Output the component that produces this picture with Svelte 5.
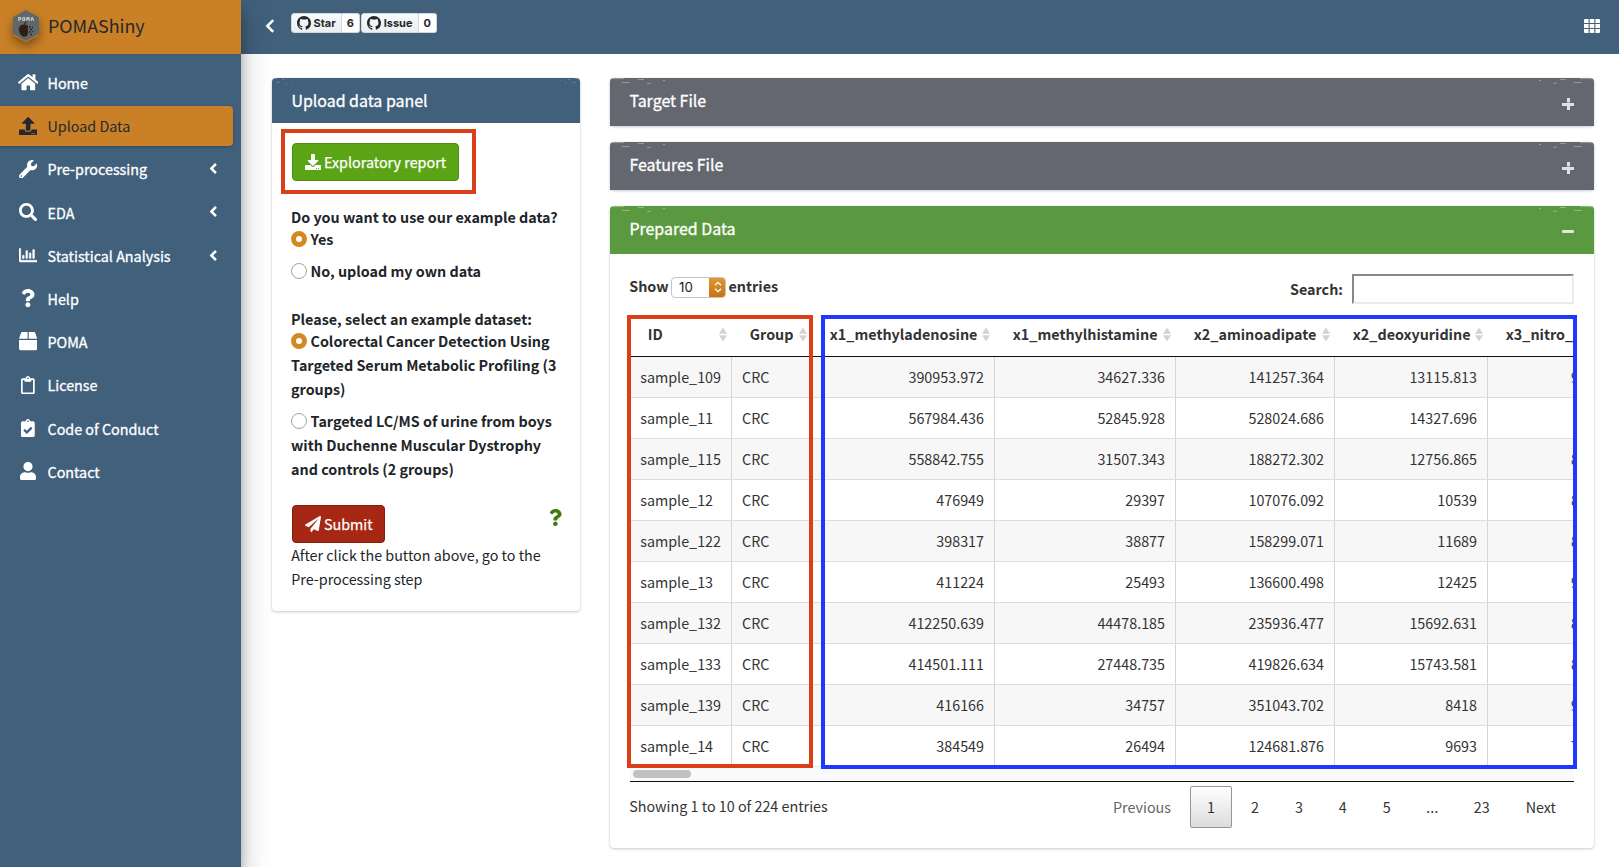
<script>
  const icons = {
    home: [576, 'M280.37 148.26L96 300.11V464a16 16 0 0 0 16 16l112.06-.29a16 16 0 0 0 15.92-16V368a16 16 0 0 1 16-16h64a16 16 0 0 1 16 16v95.64a16 16 0 0 0 16 16.05L464 480a16 16 0 0 0 16-16V300L295.67 148.26a12.19 12.19 0 0 0-15.3 0zM571.6 251.47L488 182.56V44.05a12 12 0 0 0-12-12h-56a12 12 0 0 0-12 12v72.61L318.47 43a48 48 0 0 0-61 0L4.34 251.47a12 12 0 0 0-1.6 16.9l25.5 31A12 12 0 0 0 45.15 301l235.22-193.74a12.19 12.19 0 0 1 15.3 0L530.9 301a12 12 0 0 0 16.9-1.6l25.5-31a12 12 0 0 0-1.7-16.93z'],
    upload: [512, 'M296 384h-80c-13.3 0-24-10.7-24-24V192h-87.7c-17.8 0-26.7-21.5-14.1-34.1L242.3 5.7c7.5-7.5 19.8-7.5 27.3 0l152.2 152.2c12.6 12.6 3.7 34.1-14.1 34.1H320v168c0 13.3-10.7 24-24 24zm216-8v112c0 13.3-10.7 24-24 24H24c-13.3 0-24-10.7-24-24V376c0-13.3 10.7-24 24-24h136v8c0 30.9 25.1 56 56 56h80c30.9 0 56-25.1 56-56v-8h136c13.3 0 24 10.7 24 24zm-124 88c0-11-9-20-20-20s-20 9-20 20 9 20 20 20 20-9 20-20zm64 0c0-11-9-20-20-20s-20 9-20 20 9 20 20 20 20-9 20-20z'],
    download: [512, 'M216 0h80c13.3 0 24 10.7 24 24v168h87.7c17.8 0 26.7 21.5 14.1 34.1L269.7 378.3c-7.5 7.5-19.8 7.5-27.3 0L90.1 226.1c-12.6-12.6-3.7-34.1 14.1-34.1H192V24c0-13.3 10.7-24 24-24zm296 376v112c0 13.3-10.7 24-24 24H24c-13.3 0-24-10.7-24-24V376c0-13.3 10.7-24 24-24h146.7l49 49c20.1 20.1 52.5 20.1 72.6 0l49-49H488c13.3 0 24 10.7 24 24zm-124 88c0-11-9-20-20-20s-20 9-20 20 9 20 20 20 20-9 20-20zm64 0c0-11-9-20-20-20s-20 9-20 20 9 20 20 20 20-9 20-20z'],
    wrench: [512, 'M507.73 109.1c-2.24-9.03-13.54-12.09-20.12-5.51l-74.36 74.36-67.88-11.31-11.31-67.88 74.36-74.36c6.62-6.62 3.43-17.9-5.66-20.16-47.38-11.74-99.55.91-136.58 37.93-39.64 39.64-50.55 97.1-34.05 147.2L18.74 402.76c-24.99 24.99-24.99 65.51 0 90.5 24.99 24.99 65.51 24.99 90.5 0l213.21-213.21c50.12 16.71 107.47 5.68 147.37-34.22 37.07-37.07 49.7-89.32 37.91-136.73zM64 472c-13.25 0-24-10.75-24-24 0-13.26 10.75-24 24-24s24 10.74 24 24c0 13.25-10.75 24-24 24z'],
    search: [512, 'M505 442.7L405.3 343c-4.5-4.5-10.6-7-17-7H372c27.6-35.3 44-79.7 44-128C416 93.1 322.9 0 208 0S0 93.1 0 208s93.1 208 208 208c48.3 0 92.7-16.4 128-44v16.3c0 6.4 2.5 12.5 7 17l99.7 99.7c9.4 9.4 24.6 9.4 33.9 0l28.3-28.3c9.4-9.4 9.4-24.6.1-34zM208 336c-70.7 0-128-57.2-128-128 0-70.7 57.2-128 128-128 70.7 0 128 57.2 128 128 0 70.7-57.2 128-128 128z'],
    chart: [512, 'M396.8 352h22.4c6.4 0 12.8-6.4 12.8-12.8V108.8c0-6.4-6.4-12.8-12.8-12.8h-22.4c-6.4 0-12.8 6.4-12.8 12.8v230.4c0 6.4 6.4 12.8 12.8 12.8zm-192 0h22.4c6.4 0 12.8-6.4 12.8-12.8V140.8c0-6.4-6.4-12.8-12.8-12.8h-22.4c-6.4 0-12.8 6.4-12.8 12.8v198.4c0 6.4 6.4 12.8 12.8 12.8zm96 0h22.4c6.4 0 12.8-6.4 12.8-12.8V204.8c0-6.4-6.4-12.8-12.8-12.8h-22.4c-6.4 0-12.8 6.4-12.8 12.8v134.4c0 6.4 6.4 12.8 12.8 12.8zM496 400H48V80c0-8.84-7.16-16-16-16H16C7.16 64 0 71.16 0 80v336c0 17.67 14.33 32 32 32h464c8.84 0 16-7.16 16-16v-16c0-8.84-7.16-16-16-16zm-387.2-48h22.4c6.4 0 12.8-6.4 12.8-12.8v-70.4c0-6.4-6.4-12.8-12.8-12.8h-22.4c-6.4 0-12.8 6.4-12.8 12.8v70.4c0 6.4 6.4 12.8 12.8 12.8z'],
    question: [384, 'M202.021 0C122.202 0 70.503 32.703 29.914 91.026c-7.363 10.58-5.093 25.086 5.178 32.874l43.138 32.709c10.373 7.865 25.132 6.026 33.253-4.148 25.049-31.381 43.63-49.449 82.757-49.449 30.764 0 68.816 19.799 68.816 49.631 0 22.552-18.617 34.134-48.993 51.164-35.423 19.86-82.299 44.576-82.299 106.405V320c0 13.255 10.745 24 24 24h72.471c13.255 0 24-10.745 24-24v-5.773c0-42.86 125.268-44.645 125.268-160.627C377.504 66.256 286.902 0 202.021 0zM192 373.459c-38.196 0-69.271 31.075-69.271 69.271 0 38.195 31.075 69.27 69.271 69.27s69.271-31.075 69.271-69.271-31.075-69.27-69.271-69.27z'],
    box: [512, 'M509.5 184.6L458.9 32.8C452.4 13.2 434.1 0 413.4 0H272v192h238.7c-.4-2.5-.4-5-1.2-7.4zM240 0H98.6c-20.7 0-39 13.2-45.5 32.8L2.5 184.6c-.8 2.4-.8 4.9-1.2 7.4H240V0zM0 224v240c0 26.5 21.5 48 48 48h416c26.5 0 48-21.5 48-48V224H0z'],
    clipboard: [384, 'M336 64h-80c0-35.3-28.7-64-64-64s-64 28.7-64 64H48C21.5 64 0 85.5 0 112v352c0 26.5 21.5 48 48 48h288c26.5 0 48-21.5 48-48V112c0-26.5-21.5-48-48-48zM192 40c13.3 0 24 10.7 24 24s-10.7 24-24 24-24-10.7-24-24 10.7-24 24-24zm144 418c0 3.3-2.7 6-6 6H54c-3.3 0-6-2.7-6-6V118c0-3.3 2.7-6 6-6h42v36c0 6.6 5.4 12 12 12h168c6.6 0 12-5.4 12-12v-36h42c3.3 0 6 2.7 6 6z'],
    check: [384, 'M336 64h-80c0-35.3-28.7-64-64-64s-64 28.7-64 64H48C21.5 64 0 85.5 0 112v352c0 26.5 21.5 48 48 48h288c26.5 0 48-21.5 48-48V112c0-26.5-21.5-48-48-48zM192 40c13.3 0 24 10.7 24 24s-10.7 24-24 24-24-10.7-24-24 10.7-24 24-24zm121.2 231.8l-143 141.8c-4.7 4.7-12.3 4.6-17-.1l-82.6-83.3c-4.7-4.7-4.6-12.3.1-17L99.1 285c4.7-4.7 12.3-4.6 17 .1l46 46.4 106-105.2c4.7-4.7 12.3-4.6 17 .1l28.2 28.4c4.7 4.8 4.6 12.3-.1 17z'],
    user: [448, 'M224 256c70.7 0 128-57.3 128-128S294.7 0 224 0 96 57.3 96 128s57.3 128 128 128zm89.6 32h-16.7c-22.2 10.2-46.9 16-72.9 16s-50.6-5.8-72.9-16h-16.7C60.2 288 0 348.2 0 422.4V464c0 26.5 21.5 48 48 48h352c26.5 0 48-21.5 48-48v-41.6c0-74.2-60.2-134.4-134.4-134.4z'],
    plane: [512, 'M476 3.2L12.5 270.6c-18.1 10.4-15.8 35.6 2.2 43.2L121 358.4l287.3-253.2c5.5-4.9 13.3 2.6 8.6 8.3L176 407v80.5c0 23.6 28.5 32.9 42.5 15.8L282 426l124.6 52.2c14.2 6 30.4-2.9 33-18.2l72-432C515 7.8 493.3-6.8 476 3.2z'],
    angle: [256, 'M31.7 239l136-136c9.4-9.4 24.6-9.4 33.9 0l22.6 22.6c9.4 9.4 9.4 24.6 0 33.9L127.9 256l96.4 96.4c9.4 9.4 9.4 24.6 0 33.9L201.7 409c-9.4 9.4-24.6 9.4-33.9 0l-136-136c-9.5-9.4-9.5-24.6-.1-34z'],
    github: [16, 'M8 0C3.58 0 0 3.58 0 8c0 3.54 2.29 6.53 5.47 7.59.4.07.55-.17.55-.38 0-.19-.01-.82-.01-1.49-2.01.37-2.53-.49-2.69-.94-.09-.23-.48-.94-.82-1.13-.28-.15-.68-.52-.01-.53.63-.01 1.08.58 1.23.82.72 1.21 1.87.87 2.33.66.07-.52.28-.87.51-1.07-1.78-.2-3.64-.89-3.64-3.95 0-.87.31-1.59.82-2.15-.08-.2-.36-1.02.08-2.12 0 0 .67-.21 2.2.82.64-.18 1.32-.27 2-.27s1.36.09 2 .27c1.53-1.04 2.2-.82 2.2-.82.44 1.1.16 1.92.08 2.12.51.56.82 1.27.82 2.15 0 3.07-1.87 3.75-3.65 3.95.29.25.54.73.54 1.48 0 1.07-.01 1.93-.01 2.2 0 .21.15.46.55.38A8.01 8.01 0 0 0 16 8c0-4.42-3.58-8-8-8z']
  };

  const menu = [
    { icon: 'home', label: 'Home' },
    { icon: 'upload', label: 'Upload Data', active: true },
    { icon: 'wrench', label: 'Pre-processing', sub: true },
    { icon: 'search', label: 'EDA', sub: true },
    { icon: 'chart', label: 'Statistical Analysis', sub: true },
    { icon: 'question', label: 'Help' },
    { icon: 'box', label: 'POMA' },
    { icon: 'clipboard', label: 'License' },
    { icon: 'check', label: 'Code of Conduct' },
    { icon: 'user', label: 'Contact' }
  ];

  const columns = ['ID', 'Group', 'x1_methyladenosine', 'x1_methylhistamine', 'x2_aminoadipate', 'x2_deoxyuridine', 'x3_nitro_t'];
  const rows = [
    ['sample_109', 'CRC', '390953.972', '34627.336', '141257.364', '13115.813', '9'],
    ['sample_11', 'CRC', '567984.436', '52845.928', '528024.686', '14327.696', ''],
    ['sample_115', 'CRC', '558842.755', '31507.343', '188272.302', '12756.865', '8'],
    ['sample_12', 'CRC', '476949', '29397', '107076.092', '10539', '8'],
    ['sample_122', 'CRC', '398317', '38877', '158299.071', '11689', '8'],
    ['sample_13', 'CRC', '411224', '25493', '136600.498', '12425', '9'],
    ['sample_132', 'CRC', '412250.639', '44478.185', '235936.477', '15692.631', '8'],
    ['sample_133', 'CRC', '414501.111', '27448.735', '419826.634', '15743.581', '8'],
    ['sample_139', 'CRC', '416166', '34757', '351043.702', '8418', '9'],
    ['sample_14', 'CRC', '384549', '26494', '124681.876', '9693', '7']
  ];
  const pages = ['1', '2', '3', '4', '5'];
</script>

{#snippet icon(name, size)}
  <svg class="icon" class:heavy={name === 'chart'} viewBox="0 0 {icons[name][0]} {name === 'github' ? 16 : 512}" style:height="{size}px">
    <path fill="currentColor" d={icons[name][1]} />
  </svg>
{/snippet}

{#snippet sheen(flip, wide)}
  <svg class="sheen" class:flip class:wide viewBox="0 0 60 8" preserveAspectRatio="none">
    <path d="M2 .6H14M12 4.5H20M28 1.5H34M37 5.3H41M53 2.5H55" stroke="#fff" stroke-width=".8" opacity=".4" />
  </svg>
{/snippet}

<div class="app">
  <aside>
    <div class="brand">
      <svg class="logo" viewBox="0 0 28 34">
        <path d="M14 1 27 8.5V24.5L14 32 1 24.5V8.5Z" fill="#5d676d" />
        <path d="M2 26 14 32.6 26 26" fill="none" stroke="#e08a20" stroke-width=".8" />
        <text x="14.300" y="12.200" text-anchor="middle">POMA</text>
        <path d="M12.5 16.5c-2.5-1.5-5.5.8-5.3 4.2.2 3.800 2.800 6.800 5 6.600 1.500 0 2.500-.6 3.300-1.600V16.800c-1.200-.8-2-.8-3-.3zM12.500 16c0-2 .8-3 2-3.300" fill="#2e1d10" stroke="#2e1d10" stroke-width=".7" />
        <path d="M17 18h1.500M18 20.500h2M17 23h1.500M20 18.500h1M20.500 22.500h1M18.500 25.500h1.500" stroke="#2e1d10" stroke-width="1.400" />
      </svg>
      <span>POMAShiny</span>
    </div>
    <nav>
      {#each menu as m}
        <div class="item" class:active={m.active}>
          <span class="ic">{@render icon(m.icon, 18.3)}</span>
          <span class="lbl">{m.label}</span>
          {#if m.sub}<span class="arr">{@render icon('angle', 17)}</span>{/if}
        </div>
      {/each}
    </nav>
  </aside>

  <div class="main">
    <header>
      <svg class="back" viewBox="0 0 10 14"><path d="M8.200 1.200 2.300 7l5.900 5.800" fill="none" stroke="#fff" stroke-width="2.500" /></svg>
      <div class="gh">
        <span class="ghb">{@render icon('github', 14)}Star</span><span class="ghc">6</span>
      </div>
      <div class="gh">
        <span class="ghb">{@render icon('github', 14)}Issue</span><span class="ghc">0</span>
      </div>
      <svg class="grid" viewBox="0 0 16 14"><path fill="#fff" d="M.7 0H4.600V4H0V.7zM5.700 0h4.600v4H5.700zM11.400 0h3.900l.7.7V4h-4.600zM0 5h4.600v4H0zM5.700 5h4.600v4H5.700zM11.400 5H16v4h-4.600zM0 10h4.600v4H.7L0 13.300zM5.700 10h4.600v4H5.700zM11.400 10H16v3.300l-.7.7h-3.900z" /></svg>
    </header>

    <div class="content">
      <section class="card upload">
        <div class="head blue">{@render sheen(false, false)}{@render sheen(true, false)}Upload data panel</div>
        <div class="ubody">
          <div class="btn green">{@render icon('download', 16)}<span>Exploratory report</span><i class="mark report"></i></div>
          <div class="q">Do you want to use our example data?</div>
          <div class="opt"><i class="radio on"></i>Yes</div>
          <div class="opt"><i class="radio"></i>No, upload my own data</div>
          <div class="q second">Please, select an example dataset:</div>
          <div class="opt"><i class="radio on"></i>Colorectal Cancer Detection Using<br />Targeted Serum Metabolic Profiling (3<br />groups)</div>
          <div class="opt"><i class="radio"></i>Targeted LC/MS of urine from boys<br />with Duchenne Muscular Dystrophy<br />and controls (2 groups)</div>
          <div class="submit">
            <div class="btn red">{@render icon('plane', 16)}<span>Submit</span></div>
            <span class="help">{@render icon('question', 17)}</span>
          </div>
          <div class="note">After click the button above, go to the<br />Pre-processing step</div>
        </div>
      </section>

      <div class="right">
        {#each ['Target File', 'Features File'] as t}
          <section class="card">
            <div class="head gray">{@render sheen(false, true)}{@render sheen(true, true)}{t}<i class="tool plus"></i></div>
          </section>
        {/each}
        <section class="card data">
          <div class="head leaf">{@render sheen(false, true)}{@render sheen(true, true)}Prepared Data<i class="tool"></i></div>
          <div class="dbody">
            <div class="filter">
              <div class="len">
                Show
                <span class="select"><span>10</span><b><svg viewBox="0 0 8 12"><path d="M1 4.300 4 1.400l3 2.900M1 7.700l3 2.900 3-2.900" fill="none" stroke="#fff" stroke-width="1.300" /></svg></b></span>
                entries
              </div>
              <div class="search">Search:<span class="input"></span></div>
            </div>
            <div class="tablewrap">
              <div class="scroll">
                <div class="tr th">
                  {#each columns as c, i}
                    <div class="cell"><span>{c}</span>{#if i < 6}<svg class="sort" viewBox="0 0 8 14"><path d="M4 0 8 6.300H0zM4 14 0 7.700H8z" fill="#d3d3d3" /></svg>{/if}</div>
                  {/each}
                </div>
                {#each rows as r}
                  <div class="tr">
                    {#each r as v}<div class="cell"><span>{v}</span></div>{/each}
                  </div>
                {/each}
              </div>
              <div class="bar"><i></i></div>
              <i class="mark ids"></i>
              <i class="mark vals"></i>
            </div>
            <div class="foot">
              <span>Showing 1 to 10 of 224 entries</span>
              <div class="pages">
                <span class="pg off">Previous</span>
                {#each pages as p, i}<span class="pg" class:cur={i === 0}>{p}</span>{/each}
                <span class="dots">…</span>
                <span class="pg">23</span>
                <span class="pg">Next</span>
              </div>
            </div>
          </div>
        </section>
      </div>
    </div>
  </div>
</div>

<style>
  :global(body) { margin: 0; overflow: hidden; background: #fff; }
  .app { display: flex; width: 1619px; height: 867px; overflow: hidden; font: 14.33px/24px "Noto Sans CJK SC", "Noto Sans", sans-serif; color: #212529; }
  .app :global(*) { box-sizing: border-box; }
  .icon { display: block; flex: none; }
  .heavy { stroke: currentColor; stroke-width: 14; }
  aside { width: 241px; flex: none; background: #41607c; box-shadow: 0 14px 28px rgba(0,0,0,.25), 0 10px 10px rgba(0,0,0,.22); z-index: 2; color: #fff; }
  .brand { height: 54px; background: #c98026; box-shadow: 0 1px 0 #4a5967; display: flex; align-items: center; padding-left: 12px; color: #24292f; font-size: 17.900px; }
  .brand span { margin-top: -4px; }
  .logo { width: 28px; height: 34px; margin-right: 8px; margin-top: -3px; filter: drop-shadow(0 5px 5px rgba(0,0,0,.4)); }
  .logo text { font: 700 5.800px "Liberation Mono", monospace; fill: #e6e2da; letter-spacing: .7px; }
  nav { padding-top: 9px; }
  .item { width: 233px; height: 40px; margin-bottom: 3.200px; display: flex; align-items: center; border-radius: 0 4px 4px 0; }
  .item.active { background: #c98026; color: #24292f; box-shadow: 0 1px 3px rgba(0,0,0,.25); }
  .ic { width: 40px; margin-left: 8px; display: flex; justify-content: center; margin-top: -1px; }
  .lbl { flex: 1; white-space: nowrap; margin-left: -.5px; -webkit-text-stroke: .3px currentColor; }
  .active .lbl { -webkit-text-stroke: 0; }
  .arr { margin-right: 16px; margin-top: -1.500px; }
  .main { flex: 1; min-width: 0; display: flex; flex-direction: column; }
  header { height: 54px; flex: none; background: #41607c; display: flex; align-items: flex-start; padding: 13px 19px 0 24px; }
  .back { width: 10px; height: 14px; margin: 6px 16px 0 0; }
  .gh { display: flex; height: 20px; font: 700 11px/18px Inter, sans-serif; color: #24292f; margin-right: 1.400px; }
  .ghb { display: flex; align-items: center; gap: 3px; padding: 0 5px 0 4.500px; border: 1px solid #d5d8da; background: linear-gradient(#f8fafb, #ebeff2); border-radius: 3px 0 0 3px; }
  .ghc { border: 1px solid #d5d8da; border-left: 0; background: #fff; padding: 0 5px; border-radius: 0 3px 3px 0; }
  .grid { width: 16px; height: 14px; margin-left: auto; margin-top: 6px; }
  .content { display: flex; align-items: flex-start; gap: 30px; padding: 24px 25px 0 31px; }
  .card { background: #fff; border-radius: 4px; box-shadow: 0 0 1px rgba(0,0,0,.125), 0 1px 3px rgba(0,0,0,.2); }
  .upload { width: 308px; height: 533px; flex: none; }
  .head { position: relative; height: 48px; color: #fff; font-size: 15.950px; padding: 10px 19.400px 0; border-radius: 4px 4px 0 0; -webkit-text-stroke: .3px #fff; }
  .blue { background: #41607c; height: 45px; }
  .gray { background: #64676f; }
  .leaf { background: #5a993f; }
  .sheen { position: absolute; left: 0; top: 0; width: 22px; height: 8px; }
  .sheen.wide { width: 60px; }
  .sheen.flip { left: auto; right: 0; transform: scaleX(-1); }
  .tool { position: absolute; right: 20px; top: 24px; width: 12px; height: 3px; border-radius: 1px; background: rgba(255,255,255,.8); }
  .plus { background: linear-gradient(rgba(255,255,255,.8) 0 0) center / 12px 3px no-repeat, linear-gradient(rgba(255,255,255,.8) 0 0) center top / 3px 4.500px no-repeat, linear-gradient(rgba(255,255,255,.8) 0 0) center bottom / 3px 4.500px no-repeat; height: 12px; top: 20px; }
  .ubody { padding: 20px 0 0 20px; white-space: nowrap; }
  .btn { position: relative; display: flex; align-items: center; gap: 3px; height: 38px; border-radius: 4px; padding: 0 12px; color: #fff; -webkit-text-stroke: .25px #fff; border: 1px solid; }
  .btn span { margin-top: -1px; }
  .green { width: 167px; background: #5ba416; border-color: #4d8f12; }
  .red { width: 93px; background: #a52714; border-color: #861c0c; }
  .mark { position: absolute; border: 4px solid #db3f17; pointer-events: none; }
  .report { left: -12px; top: -15px; width: 195px; height: 65px; }
  .q { font-weight: 700; margin: 25px 0 0 -1px; line-height: 22px; }
  .q.second { margin-top: 25px; }
  .opt { font-weight: 700; margin: -1px 0 9px -1px; }
  .opt + .opt { margin-bottom: 8px; }
  .radio { display: inline-block; width: 16px; height: 16px; border-radius: 50%; border: 1px solid #a3a3a3; background: #fff; vertical-align: -2px; margin-right: 3.500px; }
  .radio.on { border: 5px solid #d28a20; }
  .submit { display: flex; justify-content: space-between; padding-right: 18px; margin-top: 24px; }
  .help { color: #3d7a10; padding-top: 4px; }
  .note { margin-left: -.8px; }
  .right { flex: 1; min-width: 0; display: flex; flex-direction: column; gap: 16px; }
  .data { height: 642px; }
  .dbody { padding: 20px 20px 0; color: #333; }
  .filter { display: flex; justify-content: space-between; height: 42px; font-weight: 700; }
  .len { display: flex; gap: 2.500px; height: 24px; align-items: center; margin-left: -.8px; }
  .select { width: 55px; height: 21px; border: 1px solid #c4c4c4; border-radius: 4px; display: flex; justify-content: space-between; font: 400 13.300px/19px Inter, sans-serif; color: #222; overflow: hidden; padding-left: 7px; margin-top: 2px; }
  .select b { width: 17px; margin: -1px; background: linear-gradient(#dd9a35, #c96f12); display: flex; align-items: center; justify-content: center; }
  .select svg { width: 8px; height: 12px; }
  .search { display: flex; gap: 9px; align-items: center; height: 30px; }
  .input { width: 222px; height: 30px; border: 2px solid; border-color: #888 #ebebeb #ebebeb #888; }
  .tablewrap { position: relative; border-bottom: 1px solid #111; }
  .scroll { overflow: hidden; }
  .tr { display: grid; grid-template-columns: 102px 80px 183px 181px 159px 153px 160px; width: 1018px; height: 41px; border-bottom: 1px solid #ddd; }
  .tr:nth-child(even) { background: #f7f7f7; }
  .tr:last-child { border-bottom-color: #e6e6e6; }
  .cell { border-right: 1px solid #d6d6d6; padding: 8px 10px 0; text-align: right; line-height: 24px; white-space: nowrap; }
  .cell:nth-child(-n+2) { text-align: left; }
  .cell:first-child { border-left: 1px solid #ddd; padding-left: 9.200px; }
  .tr .cell:last-child { text-align: left; padding-left: 83px; }
  .th { font-weight: 700; border-bottom-color: #111; }
  .tr.th .cell { position: relative; border: 0; padding: 6px 17.800px 0; text-align: left; }
  .sort { position: absolute; right: 5.500px; top: 11px; width: 8px; height: 15px; }
  .bar { height: 14px; background: #fafafa; padding: 3px; }
  .bar i { display: block; width: 58px; height: 8px; border-radius: 4px; background: #c1c1c1; }
  .ids { left: -3px; top: -1px; width: 186px; height: 453px; }
  .vals { left: 191px; top: -1px; width: 756px; height: 454px; border-color: #1f38ff; }
  .foot { display: flex; justify-content: space-between; padding-top: 4px; }
  .foot > span { margin: 8px 0 0 -.8px; }
  .pages { display: flex; gap: 2px; padding-right: 1px; }
  .pg { height: 42px; border: 1px solid transparent; padding: 8px 16px 0; border-radius: 2px; }
  .off { color: #666; }
  .cur { border-color: #979797; background: linear-gradient(#fff, #dcdcdc); }
  .dots { width: 45px; text-align: center; padding-top: 9px; font-family: "Open Sans", sans-serif; font-size: 16px; }
</style>
